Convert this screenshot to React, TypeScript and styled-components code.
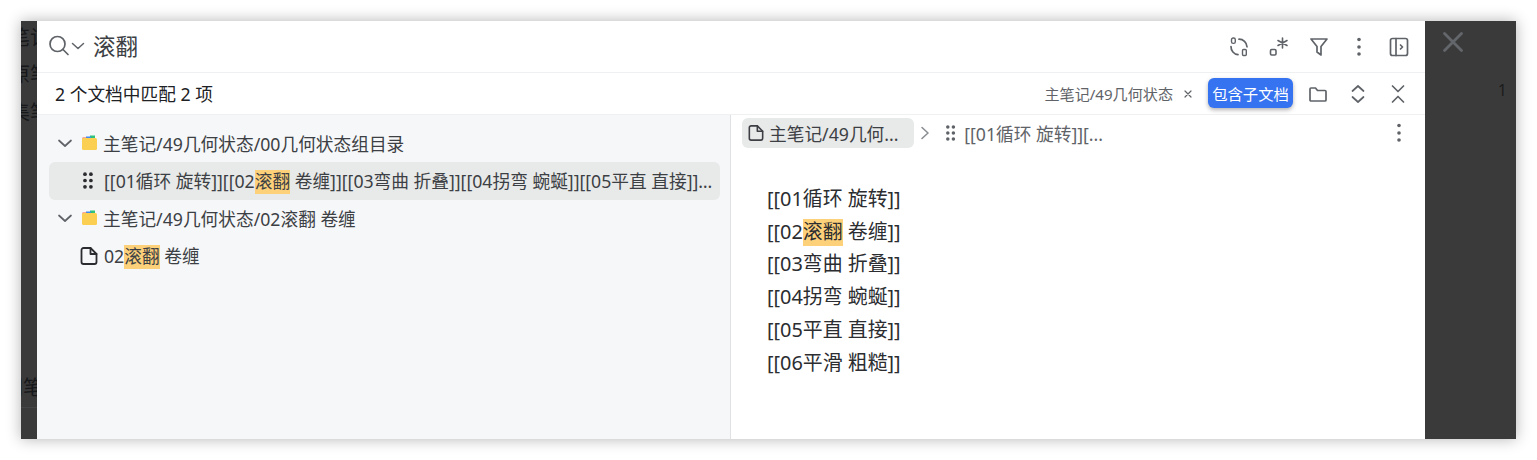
import React from 'react'
import styled, { createGlobalStyle } from 'styled-components'

const GlobalStyle = createGlobalStyle`
  html, body {
    margin: 0;
    padding: 0;
    background: #ffffff;
  }
  body {
    font-family: 'Noto Sans', 'Noto Sans CJK SC', sans-serif;
    color: #202124;
  }
`

const Page = styled.div`
  width: 1537px;
  height: 460px;
  padding: 21px;
  box-sizing: border-box;
  overflow: hidden;
`

const Window = styled.div`
  display: flex;
  width: 1495px;
  height: 418px;
  background: #3a3a3a;
  box-shadow: 0 0 14px rgba(0, 0, 0, 0.3);
`

const LeftGutter = styled.div`
  width: 16px;
  flex: none;
  overflow: hidden;
  position: relative;
  color: #17181a;
  font-size: 20px;
`

const GutterLine = styled.div<{ $top: number; $left: number }>`
  position: absolute;
  left: ${p => p.$left}px;
  top: ${p => p.$top}px;
  white-space: nowrap;
  line-height: 24px;
`

const GutterRule = styled.div`
  position: absolute;
  left: 0;
  right: 0;
  top: 386px;
  border-top: 1px solid #444546;
`

const RightGutter = styled.div`
  flex: 1;
  position: relative;
  color: #1c1c1c;
`

const CloseButton = styled.div`
  position: absolute;
  left: 16px;
  top: 9px;
  width: 24px;
  height: 24px;
  color: #63666b;
`

const PageNumber = styled.div`
  position: absolute;
  right: 9px;
  top: 58px;
  font-size: 16px;
  line-height: 22px;
`

const Dialog = styled.div`
  width: 1388px;
  flex: none;
  display: flex;
  flex-direction: column;
  background: #ffffff;
`

const SearchBar = styled.div`
  height: 51px;
  flex: none;
  display: flex;
  align-items: center;
  padding: 0 18px 0 12px;
  border-bottom: 1px solid #eff0f1;
`

const SearchIcon = styled.div`
  display: flex;
  align-items: center;
  color: #5f6368;
  width: 45px;
  flex: none;
  margin-bottom: 2px;
`

const SearchText = styled.div`
  flex: 1;
  font-size: 22.5px;
  color: #3c3f44;
  line-height: 30px;
  margin: 0 0 0 -1px;
`

const IconButton = styled.span`
  display: flex;
  align-items: center;
  justify-content: center;
  width: 16px;
  height: 20px;
  flex: none;
  color: #5f6368;

  svg {
    flex: none;
  }
`

const IconRow = styled.div`
  display: flex;
  align-items: center;
  gap: 24px;
`

const ResultBar = styled.div`
  height: 41px;
  flex: none;
  display: flex;
  align-items: center;
  padding: 0 19px 0 18px;
  border-bottom: 1px solid #eff0f1;
`

const Count = styled.div`
  flex: 1;
  font-size: 17.7px;
  color: #202124;
  margin-bottom: 2px;
`

const PathTag = styled.span`
  font-size: 15.1px;
  color: #5f6368;
  margin-bottom: 2px;
`

const TagClose = styled.span`
  display: flex;
  margin: 0 16px 0 11px;
  color: #5f6368;
`

const PrimaryButton = styled.div`
  width: 85px;
  height: 30px;
  flex: none;
  display: flex;
  align-items: center;
  justify-content: center;
  background: #3573f0;
  color: #ffffff;
  font-size: 15.3px;
  border-radius: 6px;
  box-shadow: 0 2px 4px rgba(0, 0, 0, 0.3);
  margin: 0 17px 2px 0;
`

const Body = styled.div`
  flex: 1;
  display: flex;
  min-height: 0;
`

const ListPane = styled.div`
  width: 694px;
  flex: none;
  box-sizing: border-box;
  padding: 10px 10px 0 12px;
  background: #f6f7f9;
  border-right: 1px solid #e0e1e3;
`

const GroupRow = styled.div`
  height: 37px;
  box-sizing: border-box;
  display: flex;
  align-items: center;
  padding: 0 0 2px 8px;
  font-size: 17.7px;
  color: #3c3f44;
`

const ResultRow = styled.div<{ $selected?: boolean }>`
  height: 38px;
  box-sizing: border-box;
  display: flex;
  align-items: center;
  padding: 0 7px 1px 31px;
  font-size: 17.7px;
  color: #3c3f44;
  border-radius: 6px;
  background: ${p => (p.$selected ? '#e8e9e9' : 'transparent')};
`

const RowIcon = styled.span<{ $indent?: number }>`
  display: flex;
  flex: none;
  width: 24px;
  box-sizing: border-box;
  padding-left: ${p => p.$indent ?? 0}px;
  color: #2a2c30;
`

const Chevron = styled.span`
  display: flex;
  flex: none;
  width: 16px;
  margin-right: 8px;
  color: #5f6368;
`

const Notebook = styled.svg`
  flex: none;
  width: 17px;
  height: 17px;
  margin-right: 5px;
`

const RowText = styled.span`
  white-space: nowrap;
  overflow: hidden;
  text-overflow: ellipsis;
  min-width: 0;
`

const Mark = styled.mark`
  display: inline-block;
  line-height: 1.35em;
  background: #fdd07a;
  color: inherit;
`

const PreviewPane = styled.div`
  flex: 1;
  min-width: 0;
  display: flex;
  flex-direction: column;
`

const Breadcrumb = styled.div`
  height: 30px;
  margin-top: 3px;
  display: flex;
  align-items: center;
  padding: 0 18px 0 11px;
  font-size: 17.7px;
  color: #5f6368;
`

const CrumbPill = styled.div`
  width: 172px;
  height: 30px;
  box-sizing: border-box;
  display: flex;
  align-items: center;
  gap: 5px;
  padding: 0 0 1px 6px;
  background: #e8e9e9;
  border-radius: 6px;
  color: #3c3f44;
  white-space: nowrap;
`

const CrumbArrow = styled.span`
  display: flex;
  margin: 0 14px 0 5px;
  color: #8a8d92;
`

const CrumbDots = styled.span`
  display: flex;
  margin-right: 8px;
  color: #5f6368;
`

const CrumbTail = styled.span`
  flex: 1;
  white-space: nowrap;
  margin-bottom: 1px;
`

const Document = styled.div`
  padding: 35px 0 0 36px;
  font-size: 19.9px;
  line-height: 32.7px;
  color: #2b2d30;
`

const Line = styled.div`
  white-space: nowrap;
`

const Stroke = styled.svg<{ $w?: number }>`
  fill: none;
  stroke: currentColor;
  stroke-width: ${p => p.$w ?? 2};
  stroke-linecap: round;
  stroke-linejoin: round;
  display: block;
  flex: none;
`

const Drag = ({ scale = 1 }: { scale?: number }) => (
  <svg width={14 * scale} height={20 * scale} viewBox='0 0 14 20' fill='currentColor'>
    <circle cx='3.5' cy='2.5' r='2.2' />
    <circle cx='10.5' cy='2.5' r='2.2' />
    <circle cx='3.5' cy='10' r='2.2' />
    <circle cx='10.5' cy='10' r='2.2' />
    <circle cx='3.5' cy='17.5' r='2.2' />
    <circle cx='10.5' cy='17.5' r='2.2' />
  </svg>
)

const More = () => (
  <svg width='16' height='20' viewBox='0 0 16 20' fill='currentColor'>
    <circle cx='8' cy='2.5' r='1.8' />
    <circle cx='8' cy='10' r='1.8' />
    <circle cx='8' cy='17' r='1.8' />
  </svg>
)

const Doc = ({ size = 18 }: { size?: number }) => (
  <Stroke $w={1.8} width={size} height={size} viewBox='0 0 18 18'>
    <path d='M10.5 1H3.5a2 2 0 0 0-2 2v12a2 2 0 0 0 2 2h11a2 2 0 0 0 2-2V7z' />
    <path d='M10.5 1v6h6' />
  </Stroke>
)

const Down = () => (
  <Stroke $w={1.7} width='16' height='16' viewBox='0 0 16 16'>
    <path d='M2 5.5 8 11l6-5.5' />
  </Stroke>
)

const NotebookIcon = () => (
  <Notebook viewBox='0 0 17 17'>
    <rect x='9' y='1.5' width='5' height='3' fill='#2fc27b' />
    <rect x='5' y='2.5' width='5' height='2' fill='#3c8df0' />
    <rect x='1.5' y='3.5' width='4' height='2' fill='#ef5a4c' />
    <rect x='1' y='4' width='15' height='12' rx='1.5' fill='#fbcf52' />
  </Notebook>
)

export default function App () {
  return (
    <Page>
      <GlobalStyle />
      <Window>
        <LeftGutter>
          <GutterLine $top={5} $left={-11}>笔记</GutterLine>
          <GutterLine $top={42} $left={-11}>原笔</GutterLine>
          <GutterLine $top={80} $left={-11}>集笔</GutterLine>
          <GutterLine $top={355} $left={-18}>门笔</GutterLine>
          <GutterRule />
        </LeftGutter>
        <Dialog>
          <SearchBar>
            <SearchIcon>
              <Stroke $w={1.7} width='22' height='22' viewBox='0 0 22 22'>
                <circle cx='8.5' cy='9' r='7.5' />
                <path d='m14 14.5 5 5' />
              </Stroke>
              <Stroke $w={1.5} width='14' height='12' viewBox='0 0 14 12'>
                <path d='M1.5 3.5 7 8.5l5.5-5' />
              </Stroke>
            </SearchIcon>
            <SearchText>滚翻</SearchText>
            <IconRow>
              <IconButton>
                <svg width='20' height='20' viewBox='0 0 20 20' fill='none' stroke='currentColor' strokeWidth='1.7' strokeLinecap='round'>
                  <path d='M10 2.2a8 8 0 0 1 8 7.6' />
                  <path d='M2 9.5a8 8 0 0 0 7 8.2' />
                  <rect x='2.5' y='1' width='3.8' height='5.4' rx='1.7' strokeWidth='1.4' />
                  <rect x='13.5' y='12.5' width='3.8' height='6' rx='1' strokeWidth='1.4' />
                </svg>
              </IconButton>
              <IconButton>
                <svg width='20' height='20' viewBox='0 0 20 20' fill='none' stroke='currentColor' strokeWidth='1.6' strokeLinecap='round'>
                  <rect x='1.5' y='12.5' width='5.5' height='5.5' rx='1.2' />
                  <path d='M13.5 1v10M9 3.5l9 5M18 3.5l-9 5' />
                </svg>
              </IconButton>
              <IconButton>
                <Stroke $w={1.7} width='20' height='20' viewBox='0 0 20 20'>
                  <path d='M2 2h16l-6 7.5V18l-4-3V9.5z' />
                </Stroke>
              </IconButton>
              <IconButton><More /></IconButton>
              <IconButton>
                <Stroke $w={1.7} width='20' height='20' viewBox='0 0 20 20'>
                  <rect x='1.5' y='1.5' width='17' height='17' rx='2' />
                  <path d='M7 1.5v17M11.5 8l2 2-2 2' />
                </Stroke>
              </IconButton>
            </IconRow>
          </SearchBar>
          <ResultBar>
            <Count>2 个文档中匹配 2 项</Count>
            <PathTag>主笔记/49几何状态</PathTag>
            <TagClose>
              <Stroke $w={1.2} width='8' height='8' viewBox='0 0 8 8'>
                <path d='m1 1 6 6M7 1 1 7' />
              </Stroke>
            </TagClose>
            <PrimaryButton>包含子文档</PrimaryButton>
            <IconRow>
              <IconButton>
                <Stroke $w={1.7} width='20' height='20' viewBox='0 0 20 20'>
                  <path d='M2 5a1 1 0 0 1 1-1h4.5l2 2.5H17a1 1 0 0 1 1 1V16a1 1 0 0 1-1 1H3a1 1 0 0 1-1-1z' />
                </Stroke>
              </IconButton>
              <IconButton>
                <Stroke $w={1.7} width='20' height='20' viewBox='0 0 20 20'>
                  <path d='M4.5 7 10 2l5.5 5M4.5 13l5.5 5 5.5-5' />
                </Stroke>
              </IconButton>
              <IconButton>
                <Stroke $w={1.7} width='20' height='20' viewBox='0 0 20 20'>
                  <path d='M4.5 2 10 7.5 15.5 2M4.5 18l5.5-5.5 5.5 5.5' />
                </Stroke>
              </IconButton>
            </IconRow>
          </ResultBar>
          <Body>
            <ListPane>
              <GroupRow>
                <Chevron><Down /></Chevron>
                <NotebookIcon />
                <RowText>主笔记/49几何状态/00几何状态组目录</RowText>
              </GroupRow>
              <ResultRow $selected>
                <RowIcon $indent={2}><Drag scale={0.85} /></RowIcon>
                <RowText>
                  [[01循环 旋转]][[02<Mark>滚翻</Mark> 卷缠]][[03弯曲 折叠]][[04拐弯 蜿蜒]][[05平直 直接]][[06平滑 粗糙]]
                </RowText>
              </ResultRow>
              <GroupRow>
                <Chevron><Down /></Chevron>
                <NotebookIcon />
                <RowText>主笔记/49几何状态/02滚翻 卷缠</RowText>
              </GroupRow>
              <ResultRow>
                <RowIcon><Doc /></RowIcon>
                <RowText>
                  02<Mark>滚翻</Mark> 卷缠
                </RowText>
              </ResultRow>
            </ListPane>
            <PreviewPane>
              <Breadcrumb>
                <CrumbPill>
                  <Doc size={16} />
                  <span>主笔记/49几何...</span>
                </CrumbPill>
                <CrumbArrow>
                  <Stroke $w={1.6} width='12' height='16' viewBox='0 0 12 16'>
                    <path d='m3 2.5 6 5.5-6 5.5' />
                  </Stroke>
                </CrumbArrow>
                <CrumbDots><Drag scale={0.8} /></CrumbDots>
                <CrumbTail>[[01循环 旋转]][...</CrumbTail>
                <IconButton><More /></IconButton>
              </Breadcrumb>
              <Document>
                <Line>[[01循环 旋转]]</Line>
                <Line>[[02<Mark>滚翻</Mark> 卷缠]]</Line>
                <Line>[[03弯曲 折叠]]</Line>
                <Line>[[04拐弯 蜿蜒]]</Line>
                <Line>[[05平直 直接]]</Line>
                <Line>[[06平滑 粗糙]]</Line>
              </Document>
            </PreviewPane>
          </Body>
        </Dialog>
        <RightGutter>
          <CloseButton>
            <Stroke $w={2.8} width='24' height='24' viewBox='0 0 24 24'>
              <path d='m3.5 3.5 17 17M20.5 3.5l-17 17' />
            </Stroke>
          </CloseButton>
          <PageNumber>1</PageNumber>
        </RightGutter>
      </Window>
    </Page>
  )
}
